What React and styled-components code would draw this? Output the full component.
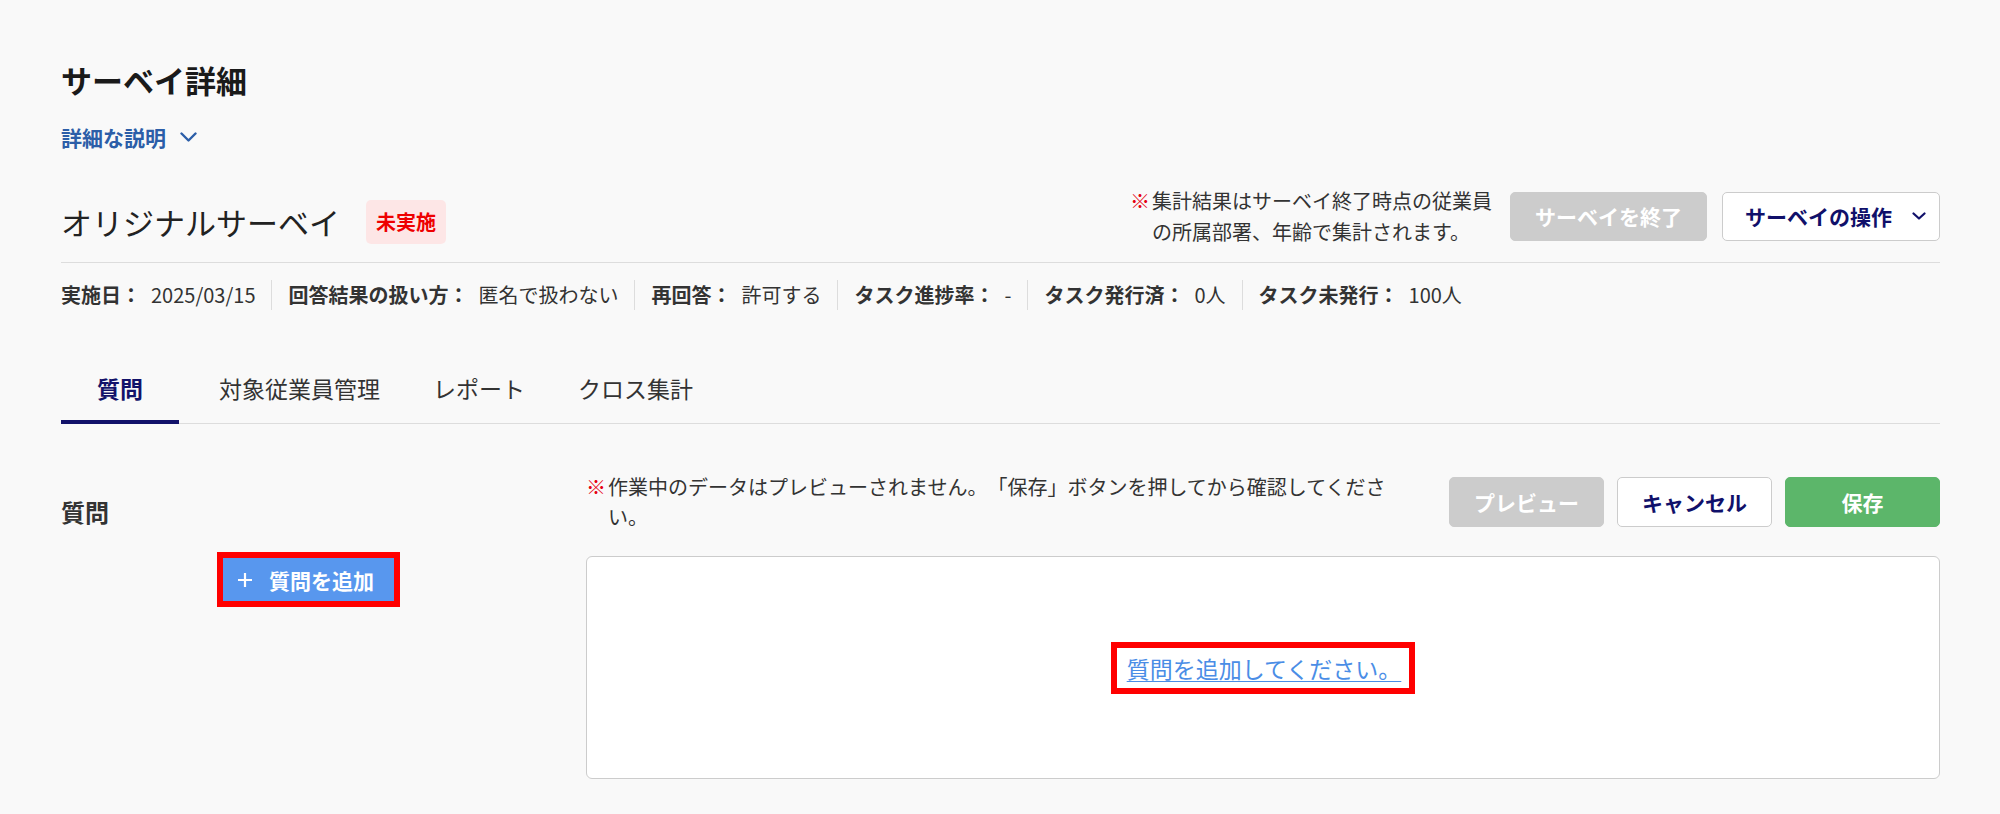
import React from 'react'
import styled, { createGlobalStyle } from 'styled-components'

const GlobalStyle = createGlobalStyle`
  html, body {
    margin: 0;
    padding: 0;
    background: #f9f9f9;
  }
  body {
    font-family: "Noto Sans CJK JP", "Noto Sans", sans-serif;
    color: #333;
    text-spacing-trim: space-all;
  }
  * { box-sizing: border-box; }
`

const Page = styled.div`
  padding: 60px 60px 0 61px;
  min-height: 814px;
`

const Title = styled.h1`
  margin: 0;
  font-size: 31px;
  line-height: 40px;
  font-weight: 700;
  color: #1a1a1a;
`

const DetailToggle = styled.button`
  margin-top: 23px;
  display: flex;
  align-items: center;
  gap: 14px;
  padding: 0;
  border: none;
  background: none;
  font-family: inherit;
  font-size: 21px;
  line-height: 28px;
  font-weight: 700;
  color: #2c5ea8;
  cursor: pointer;
`

const Header = styled.div`
  margin-top: 34px;
  padding-bottom: 15px;
  border-bottom: 1px solid #ddd;
  display: flex;
  align-items: center;
  justify-content: space-between;
`

const NameGroup = styled.div`
  display: flex;
  align-items: center;
  gap: 26px;
  margin-top: 12px;
`

const SurveyName = styled.h2`
  margin: 0;
  font-size: 31px;
  line-height: 44px;
  font-weight: 400;
  color: #222;
`

const Badge = styled.span`
  display: inline-block;
  padding: 0 10px;
  line-height: 44px;
  font-size: 20px;
  font-weight: 700;
  color: #ee0000;
  background: #fde6e6;
  border-radius: 5px;
`

const Actions = styled.div`
  display: flex;
  align-items: center;
  gap: ${p => p.$gap}px;
`

const Note = styled.p`
  margin: 0;
  display: flex;
  font-size: 20px;
  line-height: ${p => p.$lh}px;
  color: #333;
`

const Mark = styled.span`
  flex: none;
  width: 20px;
  margin-right: 2px;
  color: #e60012;
`

const NoteText = styled.span`
  width: ${p => p.$width}px;
`

const Button = styled.button`
  height: ${p => p.$h}px;
  min-width: ${p => p.$min || 0}px;
  padding: 0 ${p => p.$px || 24}px;
  display: inline-flex;
  align-items: center;
  justify-content: center;
  gap: 20px;
  font-family: inherit;
  font-size: 21px;
  font-weight: 700;
  border-radius: 5px;
  cursor: pointer;
  ${p => p.$kind === 'disabled' && `
    background: #cccccc;
    border: 1px solid #cccccc;
    color: #fff;
  `}
  ${p => p.$kind === 'outline' && `
    background: #fff;
    border: 1px solid #cccccc;
    color: #10106a;
  `}
  ${p => p.$kind === 'primary' && `
    background: #5cb66a;
    border: 1px solid #5cb66a;
    color: #fff;
  `}
`

const OpButton = styled(Button)`
  padding: 0 13px 0 22px;
`

const MetaRow = styled.div`
  margin-top: 17px;
  display: flex;
  font-size: 20px;
  line-height: 30px;
  color: #333;
`

const MetaItem = styled.div`
  padding: 0 16px;
  border-left: 1px solid #ddd;
  white-space: nowrap;
  &:first-child {
    padding-left: 0;
    border-left: none;
  }
`

const MetaLabel = styled.span`
  font-weight: 700;
`

const MetaValue = styled.span`
  margin-left: 10px;
`

const TabList = styled.div`
  margin-top: 48px;
  display: flex;
  gap: 28px;
  box-shadow: inset 0 -1px 0 #ddd;
`

const Tab = styled.div`
  min-width: 118px;
  padding: 15px 12px 17px;
  text-align: center;
  font-size: 23px;
  line-height: 30px;
  font-weight: ${p => (p.$active ? 700 : 400)};
  color: ${p => (p.$active ? '#12126a' : '#333')};
  border-bottom: 4px solid ${p => (p.$active ? '#12126a' : 'transparent')};
  cursor: pointer;
`

const Section = styled.div`
  display: grid;
  grid-template-columns: 495px 1fr;
  column-gap: 30px;
`

const SideColumn = styled.div`
  padding-top: 73px;
`

const SectionLabel = styled.h3`
  margin: 0;
  font-size: 24px;
  line-height: 30px;
  font-weight: 700;
  color: #333;
`

const AddRow = styled.div`
  margin-top: 25px;
  display: flex;
  justify-content: center;
`

const Highlight = styled.span`
  display: inline-flex;
  border: 6px solid #ff0000;
`

const AddButton = styled.button`
  height: 43px;
  padding: 0 20px 0 14px;
  display: inline-flex;
  align-items: center;
  gap: 16px;
  border: none;
  background: #5897ee;
  color: #fff;
  font-family: inherit;
  font-size: 21px;
  font-weight: 700;
  cursor: pointer;
`

const MainColumn = styled.div`
  padding-top: 48px;
`

const Toolbar = styled.div`
  display: flex;
  align-items: center;
  justify-content: space-between;
  min-height: 50px;
`

const EmptyBox = styled.div`
  margin-top: 24px;
  height: 223px;
  background: #fff;
  border: 1px solid #ccc;
  border-radius: 6px;
  display: flex;
  align-items: center;
  justify-content: center;
`

const EmptyLink = styled.a`
  display: inline-block;
  padding: 0 8px 0 10px;
  font-size: 23px;
  line-height: 40px;
  color: #4a8de6;
  text-decoration: underline;
  text-underline-offset: 3px;
  text-decoration-thickness: 1px;
  cursor: pointer;
`

const Chevron = ({ w, h, color, sw }) => (
  <svg width={w} height={h} viewBox={`0 0 ${w} ${h}`} fill="none">
    <path
      d={`M1.5 1.5 L${w / 2} ${h - 1.5} L${w - 1.5} 1.5`}
      stroke={color}
      strokeWidth={sw}
      strokeLinecap="round"
      strokeLinejoin="round"
    />
  </svg>
)

const PlusIcon = () => (
  <svg width="16" height="16" viewBox="0 0 16 16">
    <path d="M8 1 V15 M1 8 H15" stroke="#fff" strokeWidth="2.2" />
  </svg>
)

const meta = [
  { label: '実施日：', value: '2025/03/15' },
  { label: '回答結果の扱い方：', value: '匿名で扱わない' },
  { label: '再回答：', value: '許可する' },
  { label: 'タスク進捗率：', value: '-' },
  { label: 'タスク発行済：', value: '0人' },
  { label: 'タスク未発行：', value: '100人' },
]

const tabs = ['質問', '対象従業員管理', 'レポート', 'クロス集計']

const App = () => {
  return (
    <>
      <GlobalStyle />
      <Page>
        <Title>サーベイ詳細</Title>
        <DetailToggle>
          詳細な説明
          <Chevron w={17} h={10} color="#2c5ea8" sw={2.4} />
        </DetailToggle>

        <Header>
          <NameGroup>
            <SurveyName>オリジナルサーベイ</SurveyName>
            <Badge>未実施</Badge>
          </NameGroup>
          <Actions $gap={8}>
            <Note $lh={31}>
              <Mark>※</Mark>
              <NoteText $width={350}>集計結果はサーベイ終了時点の従業員の所属部署、年齢で集計されます。</NoteText>
            </Note>
            <Actions $gap={15}>
              <Button $kind="disabled" $h={49}>サーベイを終了</Button>
              <OpButton $kind="outline" $h={49}>
                サーベイの操作
                <Chevron w={14} h={8} color="#10106a" sw={2.2} />
              </OpButton>
            </Actions>
          </Actions>
        </Header>

        <MetaRow>
          {meta.map(m => (
            <MetaItem key={m.label}>
              <MetaLabel>{m.label}</MetaLabel>
              <MetaValue>{m.value}</MetaValue>
            </MetaItem>
          ))}
        </MetaRow>

        <TabList>
          {tabs.map((t, i) => (
            <Tab key={t} $active={i === 0}>{t}</Tab>
          ))}
        </TabList>

        <Section>
          <SideColumn>
            <SectionLabel>質問</SectionLabel>
            <AddRow>
              <Highlight>
                <AddButton>
                  <PlusIcon />
                  質問を追加
                </AddButton>
              </Highlight>
            </AddRow>
          </SideColumn>

          <MainColumn>
            <Toolbar>
              <Note $lh={30}>
                <Mark>※</Mark>
                <NoteText $width={798}>作業中のデータはプレビューされません。「保存」ボタンを押してから確認してください。</NoteText>
              </Note>
              <Actions $gap={13}>
                <Button $kind="disabled" $h={50} $min={155} $px={10}>プレビュー</Button>
                <Button $kind="outline" $h={50} $min={155} $px={10}>キャンセル</Button>
                <Button $kind="primary" $h={50} $min={155} $px={10}>保存</Button>
              </Actions>
            </Toolbar>
            <EmptyBox>
              <Highlight>
                <EmptyLink>質問を追加してください。</EmptyLink>
              </Highlight>
            </EmptyBox>
          </MainColumn>
        </Section>
      </Page>
    </>
  )
}

export default App
